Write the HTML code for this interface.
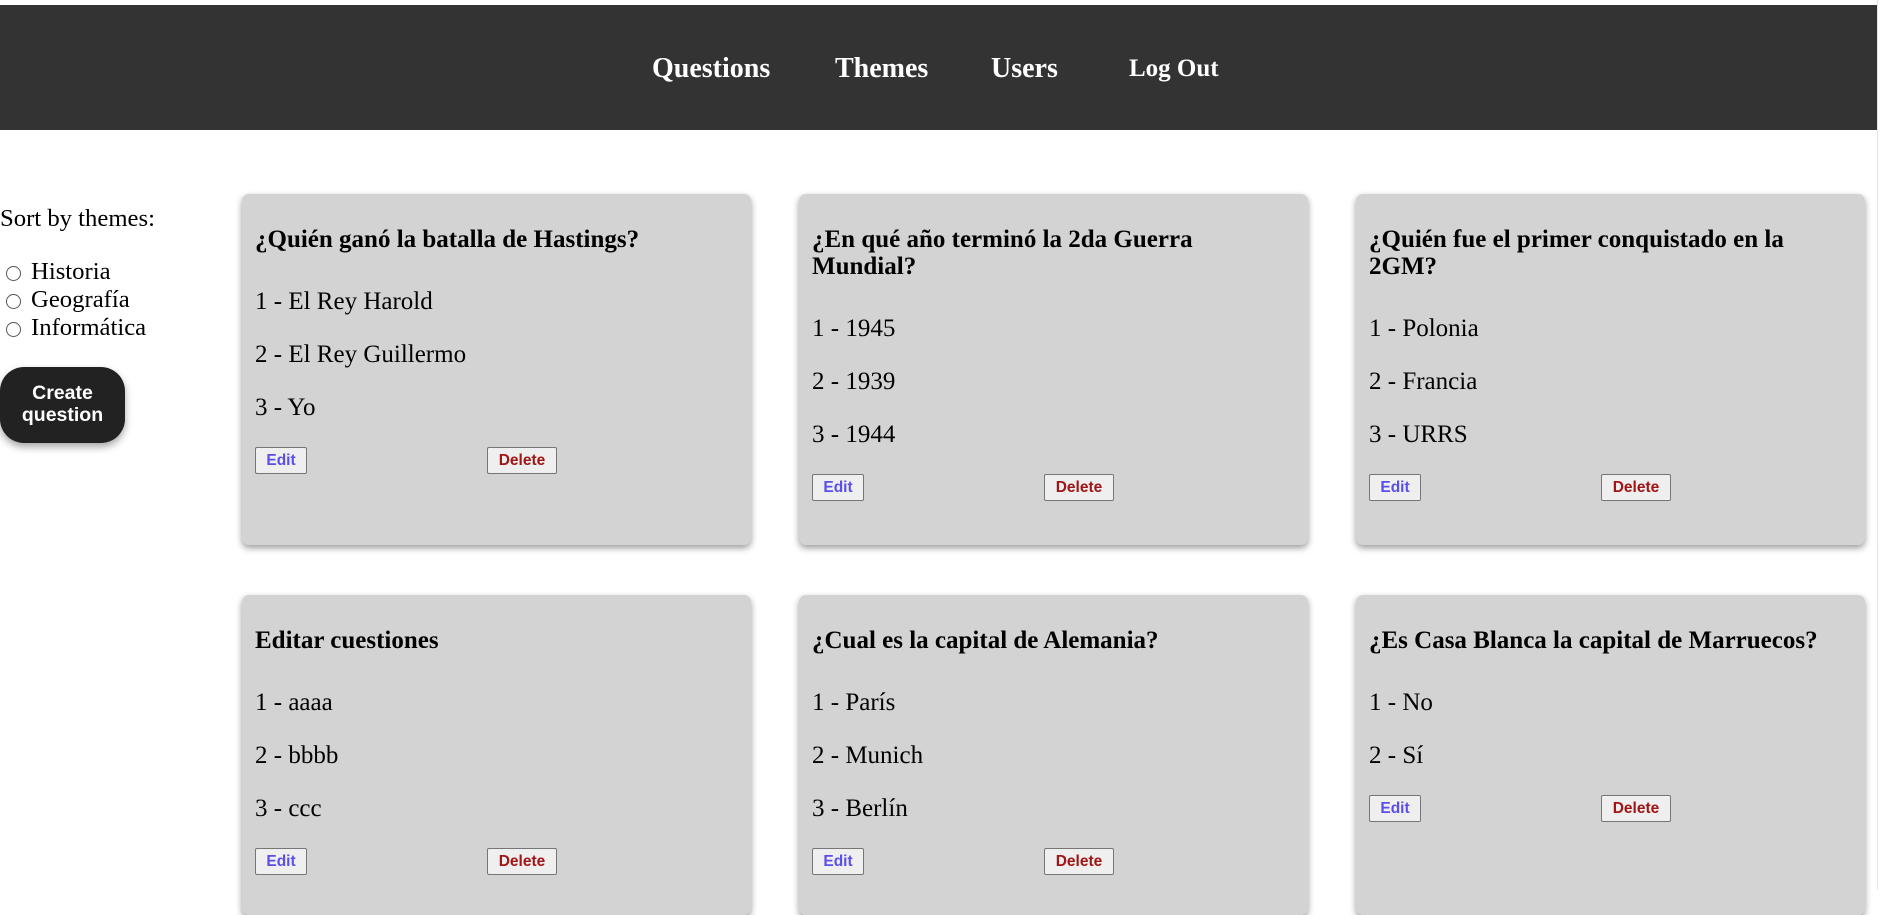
<!DOCTYPE html>
<html><head><meta charset="utf-8"><style>
*{box-sizing:border-box}
body{margin:0;width:1889px;height:890px;overflow:hidden;background:#fff;font-family:"Liberation Serif",serif;position:relative}
.nav{position:absolute;left:0;top:5px;width:1877px;height:125px;background:#333}
.nav span{position:absolute;top:49px;color:#fff;font-weight:bold;font-size:28px;line-height:30px;white-space:nowrap}
.vline{position:absolute;left:1877px;top:0;width:1px;height:890px;background:#e4e4e4}
.sort{position:absolute;left:0;top:206px;font-size:24.7px;line-height:26px}
.radio{position:absolute;left:6px;font-size:24.7px;line-height:26px;padding-left:25px}
.radio:before{content:"";position:absolute;left:0;top:7px;width:13px;height:13px;border:1px solid #555;border-radius:50%;background:#fff}
.create{position:absolute;left:0;top:367px;width:125px;height:76px;background:#222;border-radius:24px;color:#fff;font-family:"Liberation Sans",sans-serif;font-weight:bold;font-size:19.5px;line-height:22px;text-align:center;padding-top:15px;box-shadow:0 4px 8px rgba(0,0,0,.35)}
.card{position:absolute;width:509px;background:#d3d3d3;border-radius:7px;box-shadow:0 3px 7px rgba(0,0,0,.4);padding:0 13px}
.card h3{margin:32px 0 0;font-size:25px;line-height:27px;font-weight:bold;white-space:nowrap}
.card p{margin:28px 0 0;font-size:25px;line-height:25px}
.card p:first-of-type{margin-top:36px}
.btns{position:relative;height:27px;margin-top:27px}
.btn{position:absolute;top:0;height:27px;background:#efefef;border:1px solid #767676;border-radius:2px;font-family:"Liberation Sans",sans-serif;font-weight:bold;font-size:15.5px;line-height:25px;text-align:center}
.e{left:0;width:52px;color:#5a4fe8}
.d{left:232px;width:70px;color:#a01515}
</style></head><body>
<div class="nav">
<span style="left:652px">Questions</span>
<span style="left:835px">Themes</span>
<span style="left:991px">Users</span>
<span style="left:1129px;font-size:25px">Log Out</span>
</div>
<div class="vline"></div>
<div class="sort">Sort by themes:</div>
<div class="radio" style="top:259px">Historia</div>
<div class="radio" style="top:287px">Geografía</div>
<div class="radio" style="top:315px">Informática</div>
<div class="create">Create<br>question</div>

<div class="card" style="left:242px;top:194px;height:351px">
<h3>¿Quién ganó la batalla de Hastings?</h3>
<p>1 - El Rey Harold</p><p>2 - El Rey Guillermo</p><p>3 - Yo</p>
<div class="btns"><div class="btn e">Edit</div><div class="btn d">Delete</div></div>
</div>
<div class="card" style="left:799px;top:194px;height:351px">
<h3>¿En qué año terminó la 2da Guerra<br>Mundial?</h3>
<p>1 - 1945</p><p>2 - 1939</p><p>3 - 1944</p>
<div class="btns"><div class="btn e">Edit</div><div class="btn d">Delete</div></div>
</div>
<div class="card" style="left:1356px;top:194px;height:351px">
<h3>¿Quién fue el primer conquistado en la<br>2GM?</h3>
<p>1 - Polonia</p><p>2 - Francia</p><p>3 - URRS</p>
<div class="btns"><div class="btn e">Edit</div><div class="btn d">Delete</div></div>
</div>

<div class="card" style="left:242px;top:595px;height:320px">
<h3>Editar cuestiones</h3>
<p>1 - aaaa</p><p>2 - bbbb</p><p>3 - ccc</p>
<div class="btns"><div class="btn e">Edit</div><div class="btn d">Delete</div></div>
</div>
<div class="card" style="left:799px;top:595px;height:320px">
<h3>¿Cual es la capital de Alemania?</h3>
<p>1 - París</p><p>2 - Munich</p><p>3 - Berlín</p>
<div class="btns"><div class="btn e">Edit</div><div class="btn d">Delete</div></div>
</div>
<div class="card" style="left:1356px;top:595px;height:320px">
<h3>¿Es Casa Blanca la capital de Marruecos?</h3>
<p>1 - No</p><p>2 - Sí</p>
<div class="btns"><div class="btn e">Edit</div><div class="btn d">Delete</div></div>
</div>
</body></html>
